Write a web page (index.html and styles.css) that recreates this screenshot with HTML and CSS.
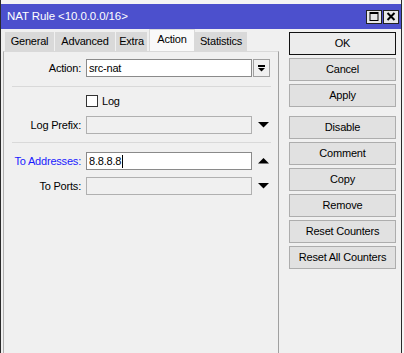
FILE: index.html
```html
<!DOCTYPE html>
<html>
<head>
<meta charset="utf-8">
<link rel="stylesheet" href="styles.css">
</head>
<body>
<div class="screen">
  <div class="window">
    <div class="topstrip"></div>
    <div class="titlebar">
      <span class="title">NAT Rule &lt;10.0.0.0/16&gt;</span>
      <div class="tbtns">
        <span class="tbtn"><svg width="14" height="12" viewBox="0 0 14 12"><rect x="3" y="1.5" width="8" height="8" fill="none" stroke="#000" stroke-width="1"/><rect x="3" y="1" width="8" height="2" fill="#000"/></svg></span>
        <span class="tbtn"><svg width="14" height="12" viewBox="0 0 14 12"><path d="M3.5 2 L10.5 9 M10.5 2 L3.5 9" stroke="#000" stroke-width="2"/></svg></span>
      </div>
    </div>
    <div class="main">
      <div class="left">
        <div class="tabs">
          <span class="tab t-general">General</span>
          <span class="tab t-advanced">Advanced</span>
          <span class="tab t-extra">Extra</span>
          <span class="tab active t-action">Action</span>
          <span class="tab t-stats">Statistics</span>
        </div>
        <div class="panel">
          <div class="row r-action">
            <span class="label">Action:</span>
            <span class="input">src-nat</span>
            <span class="ddbtn"><svg width="15" height="16" viewBox="0 0 15 16"><rect x="4" y="5" width="7" height="2" fill="#000"/><polygon points="4,8 11,8 7.5,11.5" fill="#000"/></svg></span>
          </div>
          <div class="sep s1"></div>
          <div class="checkrow">
            <span class="checkbox"></span>
            <span class="checklabel">Log</span>
          </div>
          <div class="row r-prefix">
            <span class="label">Log Prefix:</span>
            <span class="input disabled"></span>
            <span class="arrow"><svg width="11" height="6" viewBox="0 0 11 6"><polygon points="0,0 11,0 5.5,5.5" fill="#000"/></svg></span>
          </div>
          <div class="sep s2"></div>
          <div class="row r-addr">
            <span class="label blue">To Addresses:</span>
            <span class="input">8.8.8.8<span class="caret"></span></span>
            <span class="arrow"><svg width="11" height="6" viewBox="0 0 11 6"><polygon points="0,5.5 11,5.5 5.5,0" fill="#000"/></svg></span>
          </div>
          <div class="row r-ports">
            <span class="label">To Ports:</span>
            <span class="input disabled"></span>
            <span class="arrow"><svg width="11" height="6" viewBox="0 0 11 6"><polygon points="0,0 11,0 5.5,5.5" fill="#000"/></svg></span>
          </div>
        </div>
      </div>
      <div class="right">
        <span class="btn default">OK</span>
        <span class="btn">Cancel</span>
        <span class="btn">Apply</span>
        <span class="btn gap">Disable</span>
        <span class="btn">Comment</span>
        <span class="btn">Copy</span>
        <span class="btn">Remove</span>
        <span class="btn">Reset Counters</span>
        <span class="btn">Reset All Counters</span>
      </div>
    </div>
  </div>
  <div class="outside"></div>
</div>
</body>
</html>
```
FILE: styles.css
```css
html, body {
  margin: 0;
  padding: 0;
  width: 404px;
  height: 353px;
  overflow: hidden;
  background: #ffffff;
}
body {
  font-family: "Liberation Sans", Arial, sans-serif;
  font-size: 11px;
  letter-spacing: -0.2px;
  color: #000;
}
.screen {
  display: flex;
  height: 353px;
}
.window {
  width: 400px;
  height: 353px;
  border-left: 1px solid #2a2a2a;
  border-right: 1px solid #2a2a2a;
  background: #f0f0f0;
  display: flex;
  flex-direction: column;
}
.topstrip {
  height: 4px;
  background: #f4f4f4;
}
.titlebar {
  height: 25px;
  background: #4c50cd;
  display: flex;
  align-items: center;
  justify-content: space-between;
  padding-left: 6px;
  padding-right: 2px;
}
.title {
  color: #fff;
  font-size: 11.5px;
  letter-spacing: -0.1px;
  margin-top: -1px;
}
.tbtns {
  display: flex;
  gap: 1px;
  margin-top: 4px;
  align-self: flex-start;
  margin-top: 6px;
}
.tbtn {
  width: 14px;
  height: 12px;
  border: 1px solid #222;
  background: #e8e8e8;
  display: flex;
}
.main {
  flex: 1;
  display: flex;
  padding-left: 2px;
}
.left {
  width: 276px;
  display: flex;
  flex-direction: column;
}
.tabs {
  height: 22px;
  display: flex;
  align-items: flex-end;
  padding-left: 2px;
}
.tab {
  height: 19px;
  line-height: 19px;
  background: #d9d9d9;
  text-align: center;
  box-sizing: border-box;
  margin-right: 1px;
}
.tab.active {
  height: 22px;
  line-height: 19px;
  background: #f9f9f9;
  border: 1px solid #d9d9d9;
  border-bottom: none;
  margin-right: 0;
}
.t-general { width: 49px; }
.t-advanced { width: 60px; }
.t-extra { width: 31px; margin-right: 2px; }
.t-action { width: 46px; }
.t-stats { width: 52px; }
.panel {
  flex: 1;
  border-left: 1px solid #b0b0b0;
  border-right: 1px solid #a0a0a0;
  border-top: 1px solid #d9d9d9;
  display: flex;
  flex-direction: column;
  padding-top: 7px;
}
.row {
  display: flex;
  align-items: center;
  height: 18px;
}
.label {
  width: 77px;
  text-align: right;
  margin-right: 5px;
  flex: none;
}
.label.blue {
  color: #1a1aff;
}
.input {
  width: 166px;
  height: 18px;
  box-sizing: border-box;
  border: 1px solid #8a8a8a;
  background: #fff;
  padding-left: 2px;
  line-height: 16px;
  display: flex;
  align-items: center;
  flex: none;
}
.input.disabled {
  background: #f0f0f0;
  border-color: #b0b0b0;
}
.caret {
  display: inline-block;
  width: 1px;
  height: 13px;
  background: #000;
  margin-left: 1px;
}
.ddbtn {
  width: 17px;
  height: 18px;
  box-sizing: border-box;
  border: 1px solid #a0a0a0;
  background: #f0f0f0;
  margin-left: 1px;
  display: flex;
  align-items: center;
  justify-content: center;
}
.arrow {
  width: 11px;
  margin-left: 6px;
  display: flex;
}
.sep {
  height: 1px;
  background: #d9d9d9;
  margin-left: 8px;
  width: 259px;
}
.s1 { margin-top: 9px; }
.checkrow {
  display: flex;
  align-items: center;
  height: 12px;
  margin-top: 8px;
  padding-left: 82px;
}
.checkbox {
  width: 12px;
  height: 12px;
  box-sizing: border-box;
  border: 1px solid #333;
  background: #fff;
}
.checklabel {
  margin-left: 4px;
}
.r-prefix { margin-top: 9px; }
.s2 { margin-top: 8px; }
.r-addr { margin-top: 9px; }
.r-ports { margin-top: 7px; }
.right {
  width: 107px;
  margin-left: 10px;
  display: flex;
  flex-direction: column;
  gap: 3px;
  padding-top: 3px;
}
.btn {
  height: 23px;
  box-sizing: border-box;
  border: 1px solid #adadad;
  background: #e1e1e1;
  text-align: center;
  line-height: 21px;
}
.btn.default {
  border-color: #111;
  background: #ececec;
}
.btn.gap {
  margin-top: 6px;
}
.outside {
  flex: 1;
  background: #f4f4f4;
}
```
